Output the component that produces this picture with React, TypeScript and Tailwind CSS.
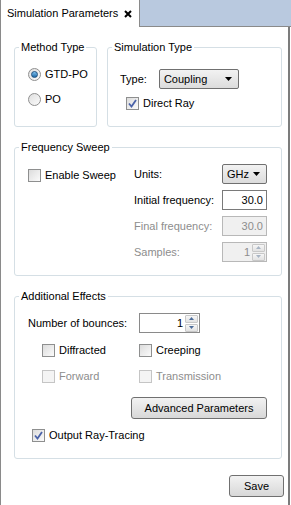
import React from 'react';

const font = { fontFamily: '"Liberation Sans", Arial, sans-serif' };

function Radio({ checked }: { checked?: boolean }) {
  return (
    <span className="flex h-[13px] w-[13px] shrink-0 items-center justify-center rounded-full border border-[#8f8f8f] bg-gradient-to-br from-[#e0e0e0] to-[#fafafa]">
      {checked && <span className="h-[7px] w-[7px] rounded-full border border-[#1d4f7e] bg-gradient-to-b from-[#7ec1ee] to-[#1a6aa8]" />}
    </span>
  );
}

function Check({ checked, disabled }: { checked?: boolean; disabled?: boolean }) {
  return (
    <span
      className={`flex h-[13px] w-[13px] shrink-0 items-center justify-center border ${
        disabled ? 'border-[#c5c5c5] bg-[#f4f4f4]' : 'border-[#8e8f8f] bg-gradient-to-br from-[#dcdcdc] to-[#fbfbfb]'
      }`}
    >
      {checked && (
        <svg width="9" height="9" viewBox="0 0 9 9">
          <path d="M1 4.5 L3.5 7.5 L8 1" fill="none" stroke="#4a62a8" strokeWidth="1.8" />
        </svg>
      )}
    </span>
  );
}

function Combo({ label, w }: { label: string; w: string }) {
  return (
    <div className={`flex h-[20px] ${w} items-center justify-between rounded-[2px] border border-[#707070] bg-gradient-to-b from-[#f2f2f2] to-[#dcdcdc] pl-[4px] pr-[6px]`}>
      <span>{label}</span>
      <svg width="7" height="4" viewBox="0 0 7 4">
        <path d="M0 0 H7 L3.5 4 Z" fill="#000" />
      </svg>
    </div>
  );
}

function SpinArrows({ disabled }: { disabled?: boolean }) {
  const c = disabled ? '#a8b4c4' : '#4d6d9a';
  return (
    <div className="flex w-[13px] flex-col gap-px py-px">
      <div className="flex h-[8px] items-center justify-center rounded-[1px] border border-[#c8c8c8] bg-gradient-to-b from-[#f6f6f6] to-[#e2e2e2]">
        <svg width="5" height="3" viewBox="0 0 5 3"><path d="M0 3 H5 L2.5 0 Z" fill={c} /></svg>
      </div>
      <div className="flex h-[8px] items-center justify-center rounded-[1px] border border-[#c8c8c8] bg-gradient-to-b from-[#f6f6f6] to-[#e2e2e2]">
        <svg width="5" height="3" viewBox="0 0 5 3"><path d="M0 0 H5 L2.5 3 Z" fill={c} /></svg>
      </div>
    </div>
  );
}

function Group({ title, className, children }: { title: string; className: string; children: React.ReactNode }) {
  return (
    <fieldset className={`rounded-[3px] border border-[#d5dfe5] ${className}`}>
      <legend className="ml-[4px] whitespace-nowrap px-[2px] leading-[13px]">{title}</legend>
      {children}
    </fieldset>
  );
}

export default function App() {
  return (
    <div className="h-[505px] w-[291px] whitespace-nowrap bg-white text-[11px] text-black" style={font}>
      {/* tab strip */}
      <div className="flex h-[27px]">
        <div className="flex w-[140px] items-center gap-[6px] border-l border-r border-[#8a8a8a] bg-white pl-[6px]">
          <span>Simulation Parameters</span>
          <svg width="8" height="8" viewBox="0 0 8 8">
            <path d="M1 1 L7 7 M7 1 L1 7" stroke="#000" strokeWidth="2" />
          </svg>
        </div>
        <div className="flex-1 border-b border-[#8a8a8a] bg-[#b9c9df]" />
      </div>

      {/* panel */}
      <div className="flex h-[478px] w-[290px] flex-col border-l border-r-2 border-l-[#8a8a8a] border-r-[#7c7c7c] pl-[13px] pr-[6px] pt-[14px]">
        <div className="flex gap-[10px]">
          <Group title="Method Type" className="h-[86px] w-[83px]">
            <div className="flex flex-col gap-[12px] pl-[13px] pt-[14px]">
              <label className="flex h-[13px] items-center gap-[4px]"><Radio checked /><span>GTD-PO</span></label>
              <label className="flex h-[13px] items-center gap-[4px]"><Radio /><span>PO</span></label>
            </div>
          </Group>
          <Group title="Simulation Type" className="h-[86px] flex-1">
            <div className="flex flex-col gap-[8px] pl-[12px] pt-[15px]">
              <div className="flex h-[20px] items-center gap-[12px]">
                <span>Type:</span>
                <Combo label="Coupling" w="w-[80px]" />
              </div>
              <label className="flex h-[13px] items-center gap-[4px] pl-[6px]"><Check checked /><span>Direct Ray</span></label>
            </div>
          </Group>
        </div>

        <Group title="Frequency Sweep" className="mt-[14px] h-[135px]">
          <div className="flex items-start pl-[13px] pr-[14px] pt-[10px]">
            <label className="mt-[5px] flex h-[13px] w-[106px] shrink-0 items-center gap-[4px]"><Check /><span>Enable Sweep</span></label>
            <div className="flex flex-1 flex-col gap-[6px]">
              <div className="flex h-[20px] items-center justify-between">
                <span>Units:</span>
                <Combo label="GHz" w="w-[45px]" />
              </div>
              <div className="flex h-[20px] items-center justify-between">
                <span>Initial frequency:</span>
                <div className="flex h-[20px] w-[45px] items-center justify-end border border-[#7a7a7a] bg-white pr-[3px]">30.0</div>
              </div>
              <div className="flex h-[20px] items-center justify-between text-[#8d8d8d]">
                <span>Final frequency:</span>
                <div className="flex h-[20px] w-[45px] items-center justify-end border border-[#b8b8b8] bg-[#f0f0f0] pr-[3px]">30.0</div>
              </div>
              <div className="flex h-[20px] items-center justify-between text-[#8d8d8d]">
                <span>Samples:</span>
                <div className="flex h-[20px] w-[45px] items-center justify-end gap-[2px] border border-[#b8b8b8] bg-[#f0f0f0] pr-px">
                  <span>1</span>
                  <SpinArrows disabled />
                </div>
              </div>
            </div>
          </div>
        </Group>

        <Group title="Additional Effects" className="mt-[14px] h-[169px]">
          <div className="flex flex-col pl-[13px] pr-[14px] pt-[10px]">
            <div className="flex h-[20px] items-center gap-[12px]">
              <span>Number of bounces:</span>
              <div className="flex h-[20px] w-[61px] items-center justify-end gap-[2px] border border-[#8a8a8a] bg-white pr-px">
                <span>1</span>
                <SpinArrows />
              </div>
            </div>
            <div className="mt-[11px] flex h-[13px] pl-[14px]">
              <label className="flex w-[97px] items-center gap-[4px]"><Check /><span>Diffracted</span></label>
              <label className="flex items-center gap-[4px]"><Check /><span>Creeping</span></label>
            </div>
            <div className="mt-[13px] flex h-[13px] pl-[14px] text-[#8d8d8d]">
              <label className="flex w-[97px] items-center gap-[4px]"><Check disabled /><span>Forward</span></label>
              <label className="flex items-center gap-[4px]"><Check disabled /><span>Transmission</span></label>
            </div>
            <div className="mt-[14px] flex justify-end">
              <button className="h-[22px] w-[136px] rounded-[3px] border border-[#707070] bg-gradient-to-b from-[#f2f2f2] to-[#d8d8d8]">
                Advanced Parameters
              </button>
            </div>
            <label className="mt-[10px] flex h-[13px] items-center gap-[4px] pl-[4px]"><Check checked /><span>Output Ray-Tracing</span></label>
          </div>
        </Group>

        <div className="mt-[16px] flex justify-end">
          <button className="mr-[-2px] h-[22px] w-[55px] rounded-[3px] border border-[#707070] bg-gradient-to-b from-[#f2f2f2] to-[#d8d8d8]">
            Save
          </button>
        </div>
      </div>
    </div>
  );
}
